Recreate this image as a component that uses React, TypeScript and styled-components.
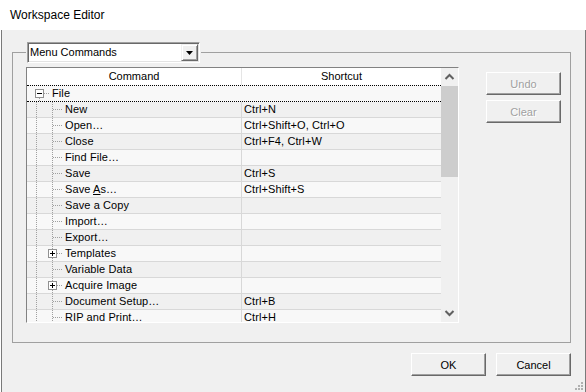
import React from 'react';
import styled, { createGlobalStyle } from 'styled-components';

const GlobalStyle = createGlobalStyle`
  * { box-sizing: border-box; }
  html, body { margin: 0; padding: 0; background: #f0f0f0; }
  body {
    font-family: 'Liberation Sans', Arial, sans-serif;
    font-size: 11px;
    color: #000;
  }
`;

const Window = styled.div`
  width: 586px;
  height: 392px;
  display: flex;
  flex-direction: column;
  background: #fff;
  overflow: hidden;
`;

const TitleBar = styled.div`
  height: 30px;
  flex: none;
  display: flex;
  align-items: center;
  padding-left: 10px;
  font-size: 12px;
  background: #fff;
`;

const Client = styled.div`
  position: relative;
  flex: 1;
  display: flex;
  flex-direction: column;
  margin-left: 1px;
  padding-top: 12px;
  background: #f0f0f0;
  border-left: 1px solid #7a7a7a;
  border-right: 1px solid #7a7a7a;
`;

const GroupBox = styled.fieldset`
  margin: 0 14px 0 10px;
  padding: 0 9px 19px 13px;
  min-width: 0;
  border: 1px solid #a0a0a0;
`;

const Legend = styled.legend`
  padding: 0 1px;
  margin: 0;
`;

const Combo = styled.div`
  width: 173px;
  height: 21px;
  display: flex;
  align-items: center;
  background: #fff;
  border: 1px solid;
  border-color: #a0a0a0 #fff #fff #a0a0a0;
  box-shadow: inset 1px 1px 0 #696969, inset -1px -1px 0 #e3e3e3;
  padding: 1px;
`;

const ComboText = styled.span`
  flex: 1;
  padding-left: 1px;
  line-height: 17px;
`;

const ComboButton = styled.div`
  width: 17px;
  height: 17px;
  display: flex;
  align-items: center;
  justify-content: center;
  background: #f0f0f0;
  border: 1px solid;
  border-color: #f0f0f0 #696969 #696969 #f0f0f0;
  box-shadow: inset 1px 1px 0 #fff, inset -1px -1px 0 #a0a0a0;
`;

const GroupBody = styled.div`
  display: flex;
  margin-top: 4px;
`;

const ListFrame = styled.div`
  width: 433px;
  height: 256px;
  display: flex;
  border: 1px solid;
  border-color: #828282 #fff #fff #828282;
  overflow: hidden;
`;

const Tree = styled.div`
  width: 414px;
  display: flex;
  flex-direction: column;
  overflow: hidden;
  background: #f8f8f8;
`;

const Header = styled.div`
  height: 17px;
  flex: none;
  display: flex;
  background: #fff;
`;

const HeaderCell = styled.div<{ $first?: boolean }>`
  ${(p) => (p.$first ? 'width: 215px; border-right: 1px solid #e5e5e5;' : 'flex: 1;')}
  text-align: center;
  line-height: 16px;
`;

const FileRow = styled.div`
  height: 17px;
  flex: none;
  display: flex;
  align-items: center;
  border-top: 1px dotted #000;
  border-bottom: 1px dotted #000;
  background: #f8f8f8;
`;

const Row = styled.div<{ $alt: boolean }>`
  height: 16px;
  flex: none;
  display: flex;
  border-bottom: 1px solid #d8d8d8;
  background: ${(p) => (p.$alt ? '#f0f0f0' : '#f8f8f8')};
`;

const CommandCell = styled.div`
  width: 215px;
  display: flex;
  align-items: center;
  border-right: 1px solid #d8d8d8;
  white-space: nowrap;
`;

const ShortcutCell = styled.div`
  flex: 1;
  display: flex;
  align-items: center;
  padding-left: 2px;
  white-space: nowrap;
`;

const Label = styled.span`
  line-height: 15px;
  letter-spacing: 0.1px;
`;

const Scrollbar = styled.div`
  width: 17px;
  display: flex;
  flex-direction: column;
  background: #f0f0f0;
`;

const ScrollArrow = styled.div`
  height: 18px;
  flex: none;
  display: flex;
  align-items: center;
  justify-content: center;
`;

const Thumb = styled.div`
  height: 91px;
  flex: none;
  background: #cdcdcd;
`;

const Track = styled.div`
  flex: 1;
`;

const SideButtons = styled.div`
  display: flex;
  flex-direction: column;
  gap: 5px;
  margin-left: 27px;
  padding-top: 5px;
`;

const Button = styled.button<{ $disabled?: boolean }>`
  width: 75px;
  height: 23px;
  padding: 0;
  font-family: inherit;
  font-size: 11px;
  background: #f0f0f0;
  border: 1px solid;
  border-color: #fff #696969 #696969 #fff;
  box-shadow: inset -1px -1px 0 #a0a0a0;
  color: ${(p) => (p.$disabled ? '#a0a0a0' : '#000')};
  text-shadow: ${(p) => (p.$disabled ? '1px 1px 0 #fff' : 'none')};
`;

const Footer = styled.div`
  display: flex;
  justify-content: flex-end;
  gap: 10px;
  margin-top: 10px;
  padding-right: 14px;
`;

const Grip = styled.svg`
  position: absolute;
  right: 1px;
  bottom: 1px;
`;

type Command = { label: React.ReactNode; shortcut?: string; expandable?: boolean };

const commands: Command[] = [
  { label: 'New', shortcut: 'Ctrl+N' },
  { label: 'Open…', shortcut: 'Ctrl+Shift+O, Ctrl+O' },
  { label: 'Close', shortcut: 'Ctrl+F4, Ctrl+W' },
  { label: 'Find File…' },
  { label: 'Save', shortcut: 'Ctrl+S' },
  { label: <>Save <u>A</u>s…</>, shortcut: 'Ctrl+Shift+S' },
  { label: 'Save a Copy' },
  { label: 'Import…' },
  { label: 'Export…' },
  { label: 'Templates', expandable: true },
  { label: 'Variable Data' },
  { label: 'Acquire Image', expandable: true },
  { label: 'Document Setup…', shortcut: 'Ctrl+B' },
  { label: 'RIP and Print…', shortcut: 'Ctrl+H' },
];

const dot = { stroke: '#a0a0a0', strokeDasharray: '1 1' };

const RootGutter = () => (
  <svg width="21" height="15" shapeRendering="crispEdges">
    <line x1="8.5" y1="12" x2="8.5" y2="15" {...dot} />
    <line x1="13" y1="7.5" x2="19" y2="7.5" {...dot} />
    <rect x="4.5" y="3.5" width="8" height="8" fill="#fff" stroke="#919191" />
    <line x1="6" y1="7.5" x2="11" y2="7.5" stroke="#000" />
  </svg>
);

const ChildGutter = ({ expandable }: { expandable?: boolean }) => (
  <svg width="37" height="15" shapeRendering="crispEdges">
    <line x1="8.5" y1="0" x2="8.5" y2="15" {...dot} />
    <line x1="24.5" y1="0" x2="24.5" y2="15" {...dot} />
    <line x1="25" y1="7.5" x2="35" y2="7.5" {...dot} />
    {expandable && (
      <>
        <rect x="20.5" y="3.5" width="8" height="8" fill="#fff" stroke="#919191" />
        <line x1="22" y1="7.5" x2="27" y2="7.5" stroke="#000" />
        <line x1="24.5" y1="5" x2="24.5" y2="10" stroke="#000" />
      </>
    )}
  </svg>
);

const Chevron = ({ up }: { up?: boolean }) => (
  <svg width="17" height="18">
    <polyline
      points={up ? '4.5,11 8.5,7 12.5,11' : '4.5,7 8.5,11 12.5,7'}
      fill="none"
      stroke="#606060"
      strokeWidth="2"
    />
  </svg>
);

const App = () => {
  return (
    <>
      <GlobalStyle />
      <Window>
        <TitleBar>Workspace Editor</TitleBar>
        <Client>
          <GroupBox>
            <Legend>
              <Combo>
                <ComboText>Menu Commands</ComboText>
                <ComboButton>
                  <svg width="7" height="4">
                    <polygon points="0,0 7,0 3.5,4" fill="#000" />
                  </svg>
                </ComboButton>
              </Combo>
            </Legend>
            <GroupBody>
              <ListFrame>
                <Tree>
                  <Header>
                    <HeaderCell $first>Command</HeaderCell>
                    <HeaderCell>Shortcut</HeaderCell>
                  </Header>
                  <FileRow>
                    <svg width="4" height="1" />
                    <RootGutter />
                    <Label>File</Label>
                  </FileRow>
                  {commands.map((c, i) => (
                    <Row key={i} $alt={i % 2 === 0}>
                      <CommandCell>
                        <svg width="1" height="1" />
                        <ChildGutter expandable={c.expandable} />
                        <Label>{c.label}</Label>
                      </CommandCell>
                      <ShortcutCell>
                        <Label>{c.shortcut}</Label>
                      </ShortcutCell>
                    </Row>
                  ))}
                </Tree>
                <Scrollbar>
                  <ScrollArrow>
                    <Chevron up />
                  </ScrollArrow>
                  <Thumb />
                  <Track />
                  <ScrollArrow>
                    <Chevron />
                  </ScrollArrow>
                </Scrollbar>
              </ListFrame>
              <SideButtons>
                <Button $disabled>Undo</Button>
                <Button $disabled>Clear</Button>
              </SideButtons>
            </GroupBody>
          </GroupBox>
          <Footer>
            <Button>OK</Button>
            <Button>Cancel</Button>
          </Footer>
          <Grip width="12" height="12" shapeRendering="crispEdges">
            {[0, 1, 2].map((n) =>
              Array.from({ length: n + 1 }).map((_, k) => (
                <rect key={`${n}-${k}`} x={9 - 3 * n + 3 * k} y={9 - 3 * k} width="2" height="2" fill="#b0b0b0" />
              ))
            )}
          </Grip>
        </Client>
      </Window>
    </>
  );
};

export default App;
